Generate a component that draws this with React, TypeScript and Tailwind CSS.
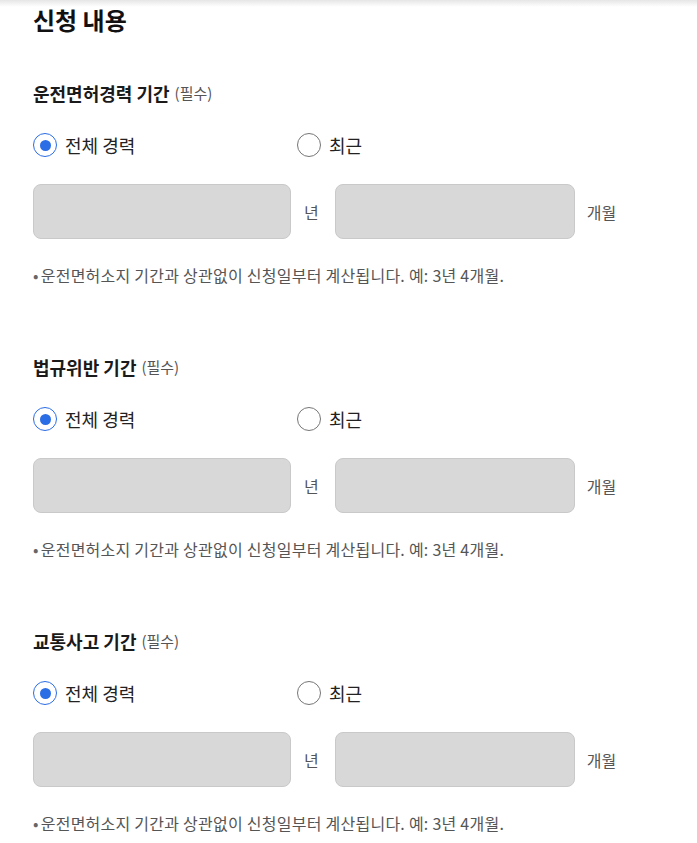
import React, { useState } from 'react';

const sections = [
  { id: 'license', title: '운전면허경력 기간' },
  { id: 'violation', title: '법규위반 기간' },
  { id: 'accident', title: '교통사고 기간' },
];

const Radio: React.FC<{ checked: boolean; label: string; onClick: () => void }> = ({ checked, label, onClick }) => (
  <button type="button" onClick={onClick} className="flex h-[24px] items-center gap-[8px] text-left">
    <span
      className={`flex h-[24px] w-[24px] items-center justify-center rounded-full border-[1.5px] bg-white ${
        checked ? 'border-[#2b6de5]' : 'border-[#767676]'
      }`}
    >
      {checked && <span className="h-[11px] w-[11px] rounded-full bg-[#2b6de5]" />}
    </span>
    <span className="text-[18px] leading-[24px] text-[#222]">{label}</span>
  </button>
);

const PeriodSection: React.FC<{ title: string }> = ({ title }) => {
  const [mode, setMode] = useState<'all' | 'recent'>('all');

  return (
    <section>
      <h3 className="flex h-[20px] items-center gap-[5px] text-[18px] font-bold text-[#1a1a1a]">
        {title}
        <span className="text-[15px] font-normal text-[#555]">(필수)</span>
      </h3>

      <div className="mt-[30px] grid w-[528px] grid-cols-2">
        <Radio checked={mode === 'all'} label="전체 경력" onClick={() => setMode('all')} />
        <Radio checked={mode === 'recent'} label="최근" onClick={() => setMode('recent')} />
      </div>

      <div className="mt-[27px] flex items-center">
        <input className="h-[55px] w-[258px] rounded-[8px] border border-[#c9c9c9] bg-[#d8d8d8] outline-none" />
        <span className="ml-[13px] text-[16px] text-[#555]">년</span>
        <input className="ml-[16px] h-[55px] w-[240px] rounded-[8px] border border-[#c9c9c9] bg-[#d8d8d8] outline-none" />
        <span className="ml-[12px] text-[16px] text-[#555]">개월</span>
      </div>

      <p className="mt-[26px] h-[20px] text-[16px] leading-[20px] tracking-[0.25px] text-[#555]">
        <span className="mr-[2px] text-[#666]">•</span>운전면허소지 기간과 상관없이 신청일부터 계산됩니다. 예: 3년 4개월.
      </p>
    </section>
  );
};

export default function App() {
  return (
    <div
      className="relative min-h-screen bg-white pl-[33px] pt-[8px]"
      style={{ fontFamily: '"Noto Sans CJK KR", "Noto Sans", sans-serif' }}
    >
      <div className="pointer-events-none absolute inset-x-0 top-0 h-[7px] bg-gradient-to-b from-[#e6e6e6] to-transparent" />

      <h2 className="text-[24px] font-bold leading-[24px] text-[#111]">신청 내용</h2>

      <div className="mt-[51px] flex flex-col gap-[72px]">
        {sections.map(s => (
          <PeriodSection key={s.id} title={s.title} />
        ))}
      </div>
    </div>
  );
}
